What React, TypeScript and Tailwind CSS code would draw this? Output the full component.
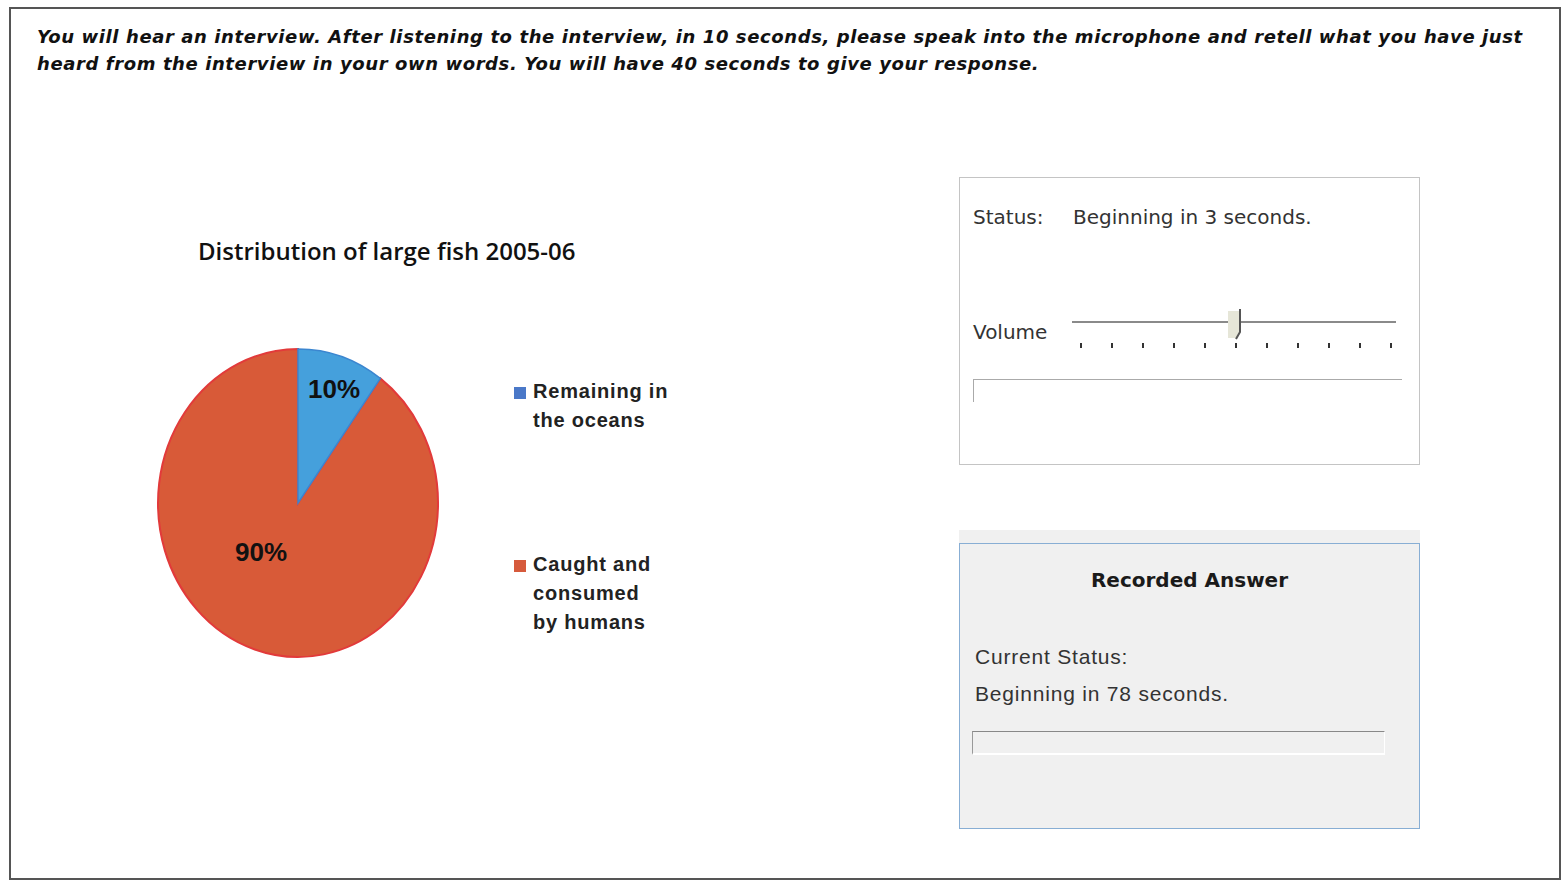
import React from "react";

/**
 * Retell-lecture test screen.
 *   instructions (top)
 *   chart (left) | status panel + recorded answer panel (right)
 */

const ticks = Array.from({ length: 11 }, (_, i) => i);

function PieChart() {
  // ellipse-ish pie, 10% blue slice starting at 12 o'clock
  return (
    <svg width="300" height="322" viewBox="0 0 300 322" className="shrink-0">
      <path
        d="M148,160 L230.3,35.4 A140,154 0 1,1 148,6 Z"
        fill="#d85a38"
        stroke="#e23a3a"
        strokeWidth="2"
      />
      <path d="M148,160 L148,6 A140,154 0 0,1 230.3,35.4 Z" fill="#45a0dc" stroke="#3b86d0" strokeWidth="1.5" />
      <text x="158" y="55" fontFamily="'Liberation Sans', Arial, sans-serif" fontWeight="700" fontSize="26" fill="#111">
        10%
      </text>
      <text x="85" y="218" fontFamily="'Liberation Sans', Arial, sans-serif" fontWeight="700" fontSize="26" fill="#111">
        90%
      </text>
    </svg>
  );
}

function LegendItem({ color, lines }: { color: string; lines: string[] }) {
  return (
    <div className="flex items-start gap-[7px]">
      <span className={`mt-[10px] h-[12px] w-[12px] shrink-0 ${color}`} />
      <div className="text-[20px] leading-[29px] font-bold tracking-[0.8px] text-[#222]">
        {lines.map((l) => (
          <div key={l}>{l}</div>
        ))}
      </div>
    </div>
  );
}

function VolumeSlider() {
  return (
    <div className="relative h-[40px] w-[324px]">
      <div className="absolute left-0 right-0 top-[13px] h-[2px] bg-[#8a8a8a]" />
      {/* thumb */}
      <svg className="absolute left-[155px] top-0" width="16" height="34" viewBox="0 0 16 34">
        <path d="M1,3 L12,3 L12,24 L9,30 L1,30 Z" fill="#e6e6d8" />
        <path d="M13,1 L13,24 L9,31" fill="none" stroke="#555" strokeWidth="2" />
      </svg>
      <div className="absolute left-[8px] right-[4px] top-[35px] flex justify-between">
        {ticks.map((t) => (
          <span key={t} className="h-[5px] w-[2px] bg-[#333]" />
        ))}
      </div>
    </div>
  );
}

export default function App() {
  return (
    <div className="h-[888px] w-[1564px] bg-white pl-[9px] pt-[7px] font-['Liberation_Sans',Arial,sans-serif]">
      <div className="flex h-[873px] w-[1552px] flex-col border-2 border-[#555]">
        {/* instructions */}
        <p className="pl-[26px] pt-[14px] font-['DejaVu_Sans',Verdana,sans-serif] text-[18px] leading-[27px] font-bold italic tracking-[0.6px] whitespace-nowrap text-[#111]">
          You will hear an interview. After listening to the interview, in 10 seconds, please speak into the microphone and retell what you have just
          <br />
          heard from the interview in your own words. You will have 40 seconds to give your response.
        </p>

        <div className="flex flex-1">
          {/* chart */}
          <div className="flex w-[940px] flex-col pt-[159px]">
            <h2 className="pl-[187px] font-['Open_Sans',sans-serif] text-[24px] leading-[30px] font-semibold text-[#111]">
              Distribution of large fish 2005-06
            </h2>
            <div className="mt-[77px] flex pl-[139px]">
              <PieChart />
              <div className="ml-[64px] flex flex-col gap-[115px] pt-[34px]">
                <LegendItem color="bg-[#4a78c8]" lines={["Remaining in", "the oceans"]} />
                <LegendItem color="bg-[#d65a3c]" lines={["Caught and", "consumed", "by humans"]} />
              </div>
            </div>
          </div>

          {/* right panels */}
          <div className="ml-[8px] flex w-[461px] flex-col pt-[100px]">
            <div className="flex h-[288px] flex-col border border-[#c4c4c4] bg-white px-[13px] pt-[24px] font-['DejaVu_Sans',Tahoma,sans-serif] text-[20px] text-[#333]">
              <div className="flex leading-[30px]">
                <span className="w-[100px]">Status:</span>
                <span>Beginning in 3 seconds.</span>
              </div>
              <div className="mt-[76px] flex items-start">
                <span className="w-[99px] pt-[9px] leading-[30px]">Volume</span>
                <VolumeSlider />
              </div>
              <div className="mt-[31px] mr-[4px] h-[23px] border-l border-t border-[#aaa]" />
            </div>

            <div className="mt-[65px] bg-[#f0f0f0] pt-[13px]">
              <div className="flex h-[286px] flex-col border border-[#88aed4] bg-[#f0f0f0] px-[12px]">
                <h3 className="pt-[21px] text-center font-['DejaVu_Sans',Tahoma,sans-serif] text-[20px] leading-[30px] font-bold text-[#1a1a1a]">
                  Recorded Answer
                </h3>
                <p className="mt-[47px] pl-[3px] text-[21px] leading-[30px] tracking-[0.8px] text-[#333]">Current Status:</p>
                <p className="mt-[7px] pl-[3px] text-[21px] leading-[30px] tracking-[0.8px] text-[#333]">Beginning in 78 seconds.</p>
                <div className="mt-[22px] mr-[22px] h-[24px] border-b-2 border-l border-r border-t border-b-white border-l-[#999] border-r-white border-t-[#888]" />
              </div>
            </div>
          </div>
        </div>
      </div>
    </div>
  );
}
